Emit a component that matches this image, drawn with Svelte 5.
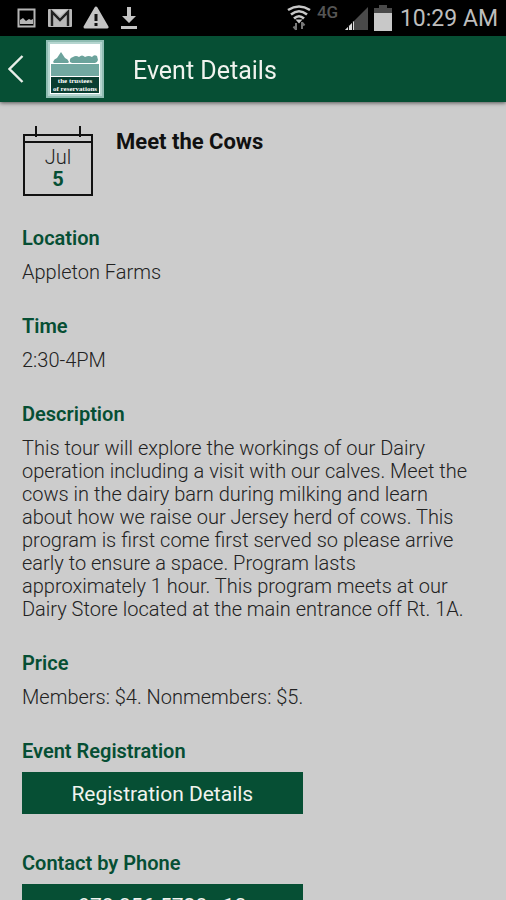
<script>
  const event = {
    month: 'Jul',
    day: 5,
    title: 'Meet the Cows',
    phone: '978.356.5728 x13',
  };

  const details = [
    { label: 'Location', text: 'Appleton Farms' },
    { label: 'Time', text: '2:30-4PM' },
    {
      label: 'Description',
      text: 'This tour will explore the workings of our Dairy operation including a visit with our calves. Meet the cows in the dairy barn during milking and learn about how we raise our Jersey herd of cows. This program is first come first served so please arrive early to ensure a space. Program lasts approximately 1 hour. This program meets at our Dairy Store located at the main entrance off Rt. 1A.',
    },
    { label: 'Price', text: 'Members: $4. Nonmembers: $5.' },
  ];
</script>

<div class="screen">
  <div class="status">
    <div class="notifications">
      <svg width="20" height="20" viewBox="0 0 20 20">
        <rect x="1.5" y="1.5" width="16" height="17" fill="none" stroke="#b5b5b5" stroke-width="2" />
        <path d="M3 16v-4l3-2 3 3 3-2 2 1 2-1v5z" fill="#b5b5b5" />
      </svg>
      <svg width="24" height="20" viewBox="0 0 24 20">
        <rect y="1" width="24" height="18" rx="1" fill="#b8b8b8" />
        <path d="M4 18V4l8 8 8-8v14" fill="none" stroke="#222" stroke-width="2.4" />
        <path d="M5 2h14l-7 6z" fill="#d0d0d0" />
      </svg>
      <svg width="26" height="24" viewBox="0 0 26 24">
        <path d="M13 2L24 21H2z" fill="#c4c4c4" stroke="#c4c4c4" stroke-width="3" stroke-linejoin="round" />
        <path d="M13 8v7M13 17v3" stroke="#111" stroke-width="3" />
      </svg>
      <svg width="18" height="24" viewBox="0 0 18 24">
        <path d="M7 1h4v9h5l-7 7-7-7h5z" fill="#c4c4c4" />
        <rect x="1" y="20" width="16" height="3" fill="#c4c4c4" />
      </svg>
    </div>
    <div class="system">
      <svg width="24" height="26" viewBox="0 0 24 26" fill="none">
        <path d="M1 5Q12-2 23 5M4 9.500Q12 3 20 9.500M7 13.500Q12 9 17 13.500" stroke="#c8c8c8" stroke-width="2.6" />
        <path d="M8.500 14.500h7L12 18.500z" fill="#c8c8c8" />
        <path d="M9 25v-7M6.500 21.500L9 24.500M15 17v7M17.500 20.500L15 17.500" stroke="#777" stroke-width="2" />
      </svg>
      <span class="network">4G</span>
      <svg width="23" height="23" viewBox="0 0 23 23">
        <path d="M0 23L23 0v23z" fill="#4a4a4a" />
        <path d="M0 23l9-9v9z" fill="#ddd" />
        <path d="M3.5 18v5M7.5 14v9" stroke="#111" />
      </svg>
      <svg width="18" height="26" viewBox="0 0 18 26">
        <path d="M5 0h8v3h5v6H0V3h5z" fill="#4a4a4a" />
        <rect y="8" width="18" height="18" fill="#c8c8c8" />
      </svg>
      <span class="clock">10:29 AM</span>
    </div>
  </div>

  <header>
    <button class="back" aria-label="Back">
      <svg width="16" height="28" viewBox="0 0 16 28">
        <path d="M14.5 1L1.500 14l13 13" fill="none" stroke="#e8eee8" stroke-width="2.4" />
      </svg>
    </button>
    <svg class="logo" width="58" height="58" viewBox="0 0 58 58">
      <rect width="58" height="58" fill="#8fbcb2" />
      <rect x="2" y="2" width="54" height="54" fill="#b5d5cf" />
      <rect x="4" y="4" width="50" height="50" fill="#ffffff" />
      <path d="M5 24h48v12H5z" fill="#72a8a1" />
      <path d="M7 22q1-3 4-4l4-6 4 6q3 1 4 4l-1 1H8zM24 22q-1-4 3-5 3-2 6 0 3-3 6 0 4-2 7 0 2-3 5-1l1 4q-1 3-3 3H26z" fill="#6ca39c" />
      <rect x="5" y="37" width="48" height="16" fill="#0a3d30" />
      <text x="29" y="43" text-anchor="middle">the trustees</text>
      <text x="29" y="51" text-anchor="middle">of reservations</text>
    </svg>
    <h1>Event Details</h1>
  </header>

  <main>
    <div class="intro">
      <div class="calendar">
        <svg width="72" height="72" viewBox="0 0 72 72" fill="none" stroke="#111">
          <path d="M2 10h68v60H2zM2 17h68M14 1v11M58 1v11" stroke-width="2" />
        </svg>
        <div class="date">
          <span>{event.month}</span>
          <strong>{event.day}</strong>
        </div>
      </div>
      <h2>{event.title}</h2>
    </div>

    {#each details as detail (detail.label)}
      <section>
        <h3>{detail.label}</h3>
        <p>{detail.text}</p>
      </section>
    {/each}

    <section class="action">
      <h3>Event Registration</h3>
      <button>Registration Details</button>
    </section>
    <section class="action">
      <h3>Contact by Phone</h3>
      <button>{event.phone}</button>
    </section>
  </main>
</div>

<style>
  :global(body) {
    margin: 0;
    background: #cccccc;
  }

  .screen {
    display: flex;
    flex-direction: column;
    height: 100vh;
    font-family: Roboto, sans-serif;
    color: #222222;
  }

  .status {
    display: flex;
    flex: none;
    justify-content: space-between;
    align-items: center;
    height: 36px;
    padding: 0 8px 0 17px;
    background: #000000;
  }

  .notifications {
    display: flex;
    align-items: center;
    gap: 11px;
  }

  .system {
    display: flex;
    align-items: center;
    gap: 6px;
  }

  .network {
    align-self: flex-start;
    width: 22px;
    font-size: 17px;
    line-height: 24px;
    font-weight: 500;
    color: #555555;
  }

  .clock {
    margin-left: 2px;
    padding-top: 2px;
    font-size: 23px;
    line-height: 34px;
    color: #bdbdbd;
  }

  header {
    display: flex;
    flex: none;
    align-items: center;
    height: 66px;
    padding: 0 8px;
    background: #064f34;
    box-shadow: 0 1px 4px rgba(0, 0, 0, 0.6);
    z-index: 1;
  }

  .back {
    display: flex;
    padding: 0;
    border: 0;
    background: none;
  }

  .logo {
    margin: 0 29px 0 22px;
  }

  .logo text {
    font-family: 'Liberation Serif', serif;
    font-size: 7px;
    font-weight: 700;
    fill: #ffffff;
  }

  h1 {
    margin: 4px 0 0;
    font-size: 25px;
    line-height: 32px;
    font-weight: 400;
    color: #f0f3ee;
  }

  main {
    flex: 1;
    min-height: 0;
    padding: 23px 24px 0 22px;
    overflow-y: auto;
    scrollbar-width: none;
    background: #cccccc;
  }

  .intro {
    display: flex;
    gap: 22px;
    margin-bottom: 29px;
  }

  .calendar {
    display: grid;
    width: 72px;
    height: 72px;
  }

  .calendar svg,
  .date {
    grid-area: 1 / 1;
  }

  .date {
    display: flex;
    flex-direction: column;
    align-items: center;
    padding-top: 21px;
    font-size: 20px;
    font-weight: 300;
    line-height: 22px;
  }

  .date strong {
    font-weight: 700;
    color: #064f34;
  }

  h2 {
    margin: 4px 0 0;
    font-size: 22px;
    line-height: 26px;
    font-weight: 700;
    color: #111111;
  }

  section {
    margin-bottom: 30px;
  }

  h3 {
    margin: 0 0 11px;
    font-size: 20px;
    line-height: 24px;
    font-weight: 600;
    color: #064f34;
  }

  p {
    margin: 0;
    font-size: 20px;
    font-weight: 300;
    line-height: 23px;
  }

  .action {
    margin-bottom: 37px;
  }

  .action h3 {
    margin-bottom: 9px;
  }

  .action button {
    display: block;
    width: 61%;
    height: 42px;
    padding: 2px 0 0;
    border: 0;
    background: #064f34;
    font-family: inherit;
    font-size: 21px;
    color: #f0f3ee;
  }
</style>
